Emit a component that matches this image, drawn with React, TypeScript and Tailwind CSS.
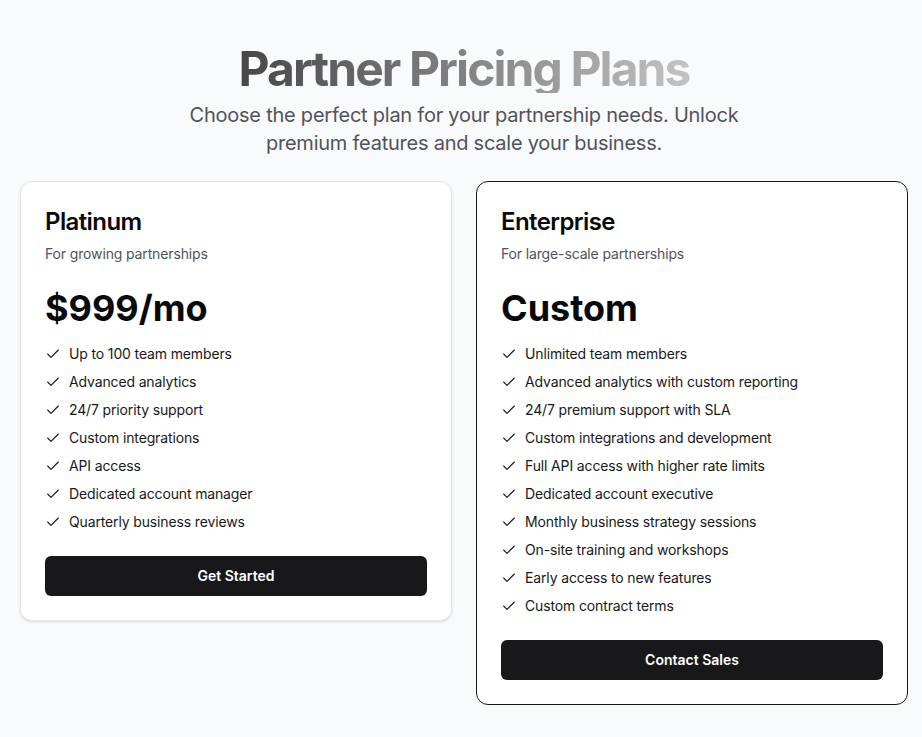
import { Check } from 'lucide-react';

type Plan = {
  name: string;
  tagline: string;
  price: string;
  features: string[];
  cta: string;
  highlighted?: boolean;
};

const plans: Plan[] = [
  {
    name: 'Platinum',
    tagline: 'For growing partnerships',
    price: '$999/mo',
    cta: 'Get Started',
    features: [
      'Up to 100 team members',
      'Advanced analytics',
      '24/7 priority support',
      'Custom integrations',
      'API access',
      'Dedicated account manager',
      'Quarterly business reviews',
    ],
  },
  {
    name: 'Enterprise',
    tagline: 'For large-scale partnerships',
    price: 'Custom',
    cta: 'Contact Sales',
    highlighted: true,
    features: [
      'Unlimited team members',
      'Advanced analytics with custom reporting',
      '24/7 premium support with SLA',
      'Custom integrations and development',
      'Full API access with higher rate limits',
      'Dedicated account executive',
      'Monthly business strategy sessions',
      'On-site training and workshops',
      'Early access to new features',
      'Custom contract terms',
    ],
  },
];

function PlanCard({ plan }: { plan: Plan }) {
  return (
    <div
      className={`rounded-xl border bg-white p-6 ${
        plan.highlighted ? 'border-zinc-900' : 'border-gray-200 shadow-sm'
      }`}
    >
      <h2 className="text-2xl font-semibold tracking-tight text-zinc-950">{plan.name}</h2>
      <p className="mt-1.5 text-sm tracking-[-0.01em] text-zinc-600">{plan.tagline}</p>
      <p className="mt-6 text-4xl font-bold text-zinc-950">{plan.price}</p>
      <ul className="mt-4 space-y-2">
        {plan.features.map((f) => (
          <li key={f} className="flex items-center gap-2 text-sm tracking-[-0.01em] text-zinc-900">
            <Check size={16} strokeWidth={1.75} className="shrink-0" />
            <span>{f}</span>
          </li>
        ))}
      </ul>
      <button className="mt-6 h-10 w-full rounded-md bg-zinc-900 text-sm font-semibold text-white">
        {plan.cta}
      </button>
    </div>
  );
}

export default function App() {
  return (
    <div
      className="min-h-screen bg-gray-50 pb-8 pl-5 pr-[14px] pt-[45px]"
      style={{ fontFamily: 'Inter, "Noto Sans", sans-serif' }}
    >
      <div className="text-center">
        <h1 className="inline-block bg-gradient-to-r from-[#47474a] to-[#c4c4c4] bg-clip-text text-5xl leading-none font-bold tracking-[-0.04em] text-transparent">
          Partner Pricing Plans
        </h1>
        <p className="mx-auto mt-2 max-w-xl text-xl tracking-[-0.012em] text-zinc-600">
          Choose the perfect plan for your partnership needs. Unlock premium features and scale your business.
        </p>
      </div>

      <div className="mt-6 grid grid-cols-2 items-start gap-6">
        {plans.map((p) => (
          <PlanCard key={p.name} plan={p} />
        ))}
      </div>
    </div>
  );
}
